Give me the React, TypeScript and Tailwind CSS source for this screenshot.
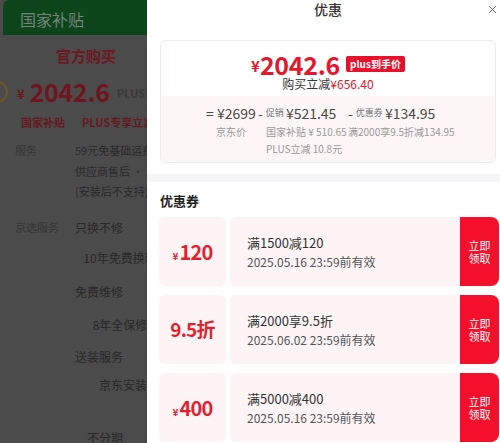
import { X } from "lucide-react";

type CouponProps = {
  amount: string;
  unit?: "yuan" | "discount";
  title: string;
  date: string;
};

function Coupon({ amount, unit = "yuan", title, date }: CouponProps) {
  return (
    <div className="flex h-[69px] gap-[4px]">
      <div className="flex w-[67px] shrink-0 items-center justify-center rounded-[6px] bg-[#fcf4f5] text-[#e41f30]">
        {unit === "yuan" ? (
          <div className="flex items-baseline">
            <span className="mr-[1px] text-[10px] font-semibold">¥</span>
            <span className="text-[20px] font-semibold tracking-[-0.8px]">{amount}</span>
          </div>
        ) : (
          <span className="text-[19px] font-semibold tracking-[-0.8px]">{amount}折</span>
        )}
      </div>
      <div className="flex flex-1 overflow-hidden rounded-l-[6px] rounded-r-[8px]">
        <div className="flex flex-1 flex-col justify-center bg-[#fcf4f5] pl-[17px]">
          <div className="text-[13px] leading-[18px] text-[#333]">{title}</div>
          <div className="mt-[1px] text-[12px] leading-[17px] text-[#555]">{date}</div>
        </div>
        <button
          type="button"
          className="flex w-[39px] shrink-0 flex-col items-center justify-center bg-[#f4102b] text-[11px] leading-[13px] text-white"
        >
          <span>立即</span>
          <span>领取</span>
        </button>
      </div>
    </div>
  );
}

function BackgroundPage() {
  return (
    <div className="w-[147px] shrink-0 overflow-hidden bg-[#4b4b4b]">
      <div className="w-[330px]">
        <div className="ml-[3px] flex h-[35px] items-center rounded-tl-[6px] bg-[#0b4519] pl-[17px] pt-[3px] text-[16px] text-[#76837a]">
          国家补贴
        </div>

        <div className="flex h-[42px] items-center pl-[56px] text-[15px] font-bold text-[#6c1820]">
          官方购买
        </div>

        <div className="flex h-[30px] items-center">
          <div className="-ml-[14px] h-[22px] w-[22px] shrink-0 rounded-full border-[2px] border-[#74561b]" />
          <span className="ml-[9px] mt-[4px] text-[13px] font-bold text-[#70141d]">¥</span>
          <span className="ml-[5px] text-[25px] font-bold tracking-[-0.3px] text-[#70141d]">2042.6</span>
          <span className="ml-[7px] mt-[3px] text-[11px] font-bold text-[#3a3a3a]">PLUS到手价</span>
        </div>

        <div className="flex h-[30px] items-center gap-[17px] pl-[21px] text-[11px] font-semibold text-[#66181f]">
          <span>国家补贴</span>
          <span>PLUS专享立减</span>
        </div>

        <div className="mt-[3px] flex">
          <div className="w-[75px] shrink-0 pl-[15px] text-[11px] leading-[20px] text-[#363636]">服务</div>
          <div className="text-[11px] leading-[20.5px] text-[#2a2a2a]">
            <div>59元免基础运费 · 京东发货</div>
            <div>供应商售后 · 京东物流</div>
            <div>(安装后不支持)</div>
          </div>
        </div>

        <div className="mt-[16px] flex h-[20px] items-center">
          <div className="w-[75px] shrink-0 pl-[15px] text-[11px] text-[#363636]">京选服务</div>
          <div className="text-[12px] text-[#282828]">只换不修</div>
        </div>
        <div className="ml-[75px] mt-[5px] flex h-[30px] w-[90px] items-center justify-center text-[12px] text-[#282828]">
          10年免费换新
        </div>

        <div className="ml-[75px] mt-[9px] flex h-[20px] items-center text-[12px] text-[#282828]">免费维修</div>
        <div className="ml-[75px] mt-[8px] flex h-[30px] w-[90px] items-center justify-center text-[12px] text-[#282828]">
          8年全保修
        </div>

        <div className="ml-[75px] mt-[7px] flex h-[20px] items-center text-[12px] text-[#282828]">送装服务</div>
        <div className="ml-[75px] mt-[3px] flex h-[30px] w-[96px] items-center justify-center text-[12px] text-[#282828]">
          京东安装
        </div>

        <div className="ml-[75px] mt-[23px] flex h-[30px] w-[60px] items-center justify-center text-[12px] text-[#282828]">
          不分期
        </div>
      </div>
    </div>
  );
}

export default function App() {
  return (
    <div className="flex h-[443px] w-[500px] overflow-hidden bg-white font-['Noto_Sans_CJK_SC',sans-serif]">
      <BackgroundPage />

      <div className="w-[362px] shrink-0 bg-white">
        <div className="relative flex h-[18px] items-center justify-center">
          <span className="text-[14px] font-medium text-[#333]">优惠</span>
          <X className="absolute right-[10px] top-[3px] h-[13px] w-[13px] text-[#555]" strokeWidth={1.6} />
        </div>

        <div className="mx-[13px] mt-[22px] overflow-hidden rounded-[6px] border border-[#f1e9ea]">
          <div className="flex flex-col items-center pb-[5px] pt-[11px]">
            <div className="flex h-[24px] items-center leading-[24px]">
              <span className="mt-[3px] text-[15px] font-semibold text-[#e6162e]">¥</span>
              <span className="text-[25px] font-semibold tracking-[-0.3px] text-[#e6162e]">2042.6</span>
              <span className="ml-[6px] flex h-[16px] items-center rounded-[2px] bg-[#e8102b] px-[4px] text-[10px] font-bold leading-[16px] text-white">
                plus到手价
              </span>
            </div>
            <div className="text-[12px] leading-[15px] text-[#333]">
              购买立减<span className="text-[#e6162e]">¥656.40</span>
            </div>
          </div>

          <div className="flex bg-[#fdf6f6] pb-[5px] pl-[45px] pt-[7px] text-[#4a4a4a]">
            <div className="w-[52px] shrink-0">
              <div className="text-[14px] leading-[20px]">= ¥2699</div>
              <div className="pl-[10px] text-[10px] leading-[17px] text-[#999]">京东价</div>
            </div>
            <div className="w-[90px] shrink-0">
              <div className="flex items-center text-[14px] leading-[20px]">
                <span>-</span>
                <span className="ml-[3px] text-[9px] text-[#777]">促销</span>
                <span className="ml-[2px]">¥521.45</span>
              </div>
              <div className="pl-[8px] text-[10px] leading-[17px] text-[#999]">国家补贴 ¥ 510.65</div>
              <div className="pl-[8px] text-[10px] leading-[17px] text-[#999]">PLUS立减 10.8元</div>
            </div>
            <div className="shrink-0">
              <div className="flex items-center text-[14px] leading-[20px]">
                <span>-</span>
                <span className="ml-[3px] text-[9px] text-[#777]">优惠券</span>
                <span className="ml-[2px]">¥134.95</span>
              </div>
              <div className="text-[10px] leading-[17px] text-[#999]">满2000享9.5折减134.95</div>
            </div>
          </div>
        </div>

        <div className="mt-[11px] h-[8px] bg-[#f5f5f8]" />

        <div className="pl-[13px] pt-[10px] text-[13px] font-bold leading-[17px] text-[#222]">优惠券</div>

        <div className="mt-[8px] flex flex-col gap-[9px] pl-[12px] pr-[10px]">
          <Coupon amount="120" title="满1500减120" date="2025.05.16 23:59前有效" />
          <Coupon amount="9.5" unit="discount" title="满2000享9.5折" date="2025.06.02 23:59前有效" />
          <Coupon amount="400" title="满5000减400" date="2025.05.16 23:59前有效" />
        </div>
      </div>
    </div>
  );
}
